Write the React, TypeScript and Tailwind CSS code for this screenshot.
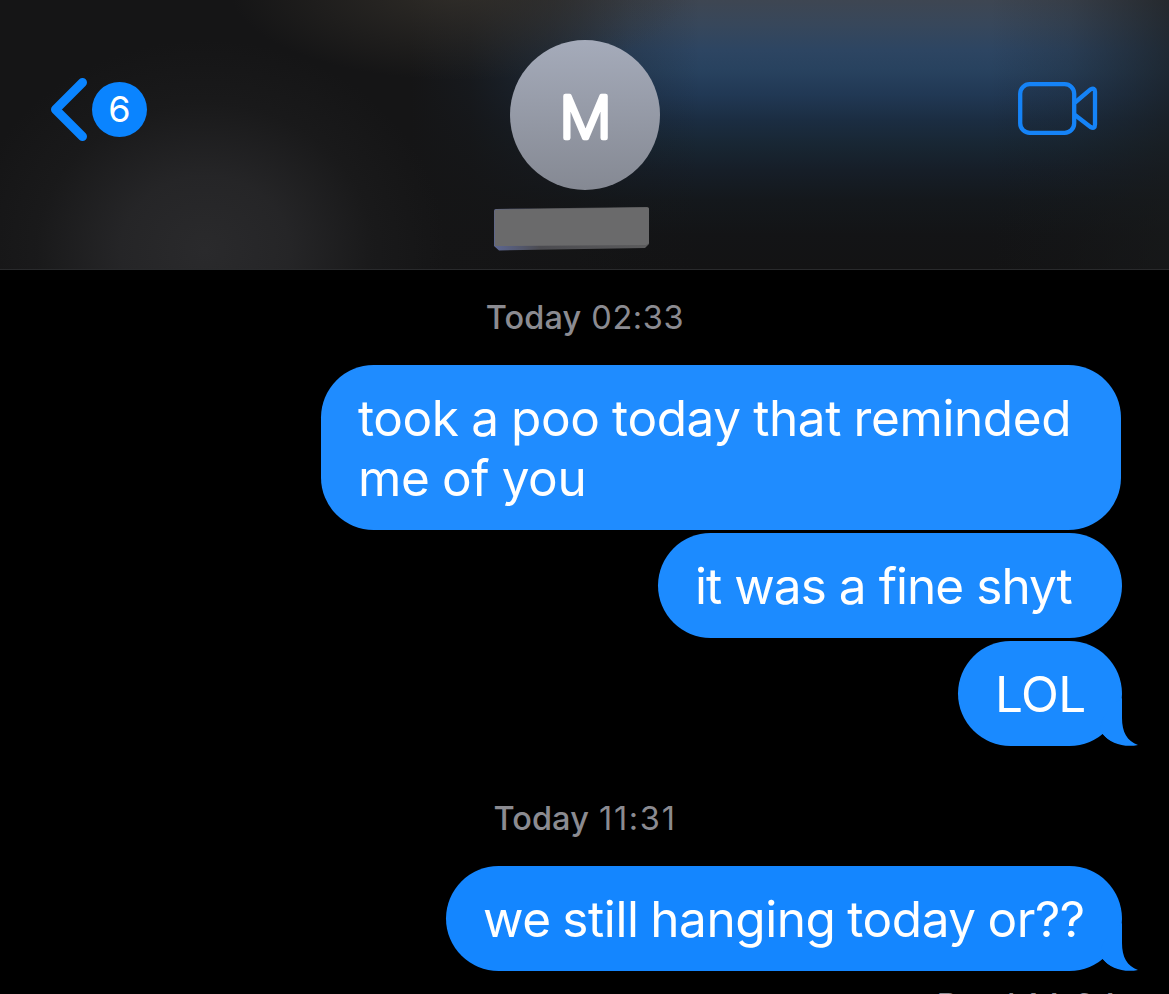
type Message = {
  id: number
  text: string
  size: string
  tail?: boolean
}

const earlier: Message[] = [
  { id: 1, text: 'took a poo today that reminded me of you', size: 'w-[800px] h-[165px] mr-px bg-[#1f8cff] pr-4 tracking-[-0.4px] [word-spacing:-1px]' },
  { id: 2, text: 'it was a fine shyt', size: 'w-[464px] h-[105px] bg-[#1c8bff] tracking-[-0.95px]' },
  { id: 3, text: 'LOL', size: 'w-[164px] h-[105px] bg-[#1a8aff] tracking-[-0.6px]', tail: true },
]

const later: Message[] = [
  { id: 4, text: 'we still hanging today or??', size: 'w-[676px] h-[105px] bg-[#1486ff] tracking-[-0.42px] [word-spacing:-1.8px]', tail: true },
]

function BackIcon() {
  return (
    <svg width="38" height="64" viewBox="0 0 38 64" fill="none" stroke="#0a84ff" strokeWidth="9" strokeLinecap="round" strokeLinejoin="round">
      <path d="M32.5 4.5 5.5 31.5 32.5 58.5" />
    </svg>
  )
}

function VideoIcon() {
  return (
    <svg width="82" height="56" viewBox="0 0 82 56" fill="none" stroke="#1583f7" strokeWidth="4.3" strokeLinejoin="round">
      <rect x="3.2" y="4.2" width="54" height="48.6" rx="9.5" />
      <path d="M58 22.5 73.5 9.4Q78 7.3 78 11.5V44.5Q78 49.5 73.5 47L58 35" />
    </svg>
  )
}

function Tail({ color }: { color: string }) {
  return (
    <svg className="absolute bottom-0 -right-4" width="48" height="48" viewBox="0 0 48 48">
      <path d="M32 0V20C32 34 37 43 48 47C34 50 20 45 12 36C6 30 16 10 32 0Z" fill={color} />
      <path d="M0 48C6 45 9 40 12.5 36C16.5 41 23 46 31 48Z" fill="#000" />
    </svg>
  )
}

function Bubble({ message }: { message: Message }) {
  return (
    <div className={`relative shrink-0 rounded-[52.5px] pl-[37px] pt-[23px] text-[49.5px] leading-[60px] text-white ${message.size}`}>
      {message.tail && <Tail color={message.id === 3 ? '#1a8aff' : '#1486ff'} />}
      <p className="relative">{message.text}</p>
    </div>
  )
}

function Timestamp({ time, spacing }: { time: string; spacing: string }) {
  return (
    <div className="flex h-[40px] items-center justify-center gap-[10px] pl-px text-[32.5px] leading-[40px] text-[#8b8b91]">
      <span className="font-medium tracking-[0.1px]">Today</span>
      <span className={spacing}>{time}</span>
    </div>
  )
}

export default function App() {
  return (
    <div className="flex h-[994px] w-[1169px] flex-col overflow-hidden bg-black font-['Inter',sans-serif]">
      <header className="grid h-[270px] shrink-0 grid-cols-3 border-b border-[#292a2c] bg-[radial-gradient(ellipse_240px_210px_at_205px_250px,#2a2a2c_0%,rgba(40,40,42,0.85)_35%,rgba(32,32,33,0.4)_70%,transparent_100%),radial-gradient(ellipse_230px_90px_at_460px_-10px,rgba(56,52,46,0.75)_0%,transparent_100%),linear-gradient(to_right,#151516_0px,#151516_410px,rgba(21,21,22,0.9)_470px,rgba(21,21,22,0.6)_550px,rgba(21,21,22,0.2)_630px,transparent_700px,transparent_990px,rgba(24,26,27,0.2)_1070px,rgba(24,26,27,0.65)_1169px),linear-gradient(to_bottom,#3e4652_0px,#37475b_25px,#2d4562_50px,#28425f_70px,#213854_95px,#1b2d42_120px,#182633_145px,#161e28_170px,#14181c_200px,#131416_235px,#131314_270px)]">
        <div className="flex items-start pl-[50px] pt-[78px]">
          <BackIcon />
          <span className="ml-1 mt-1 flex h-[55px] w-[55px] items-center justify-center rounded-full bg-[#0a84ff] pb-0.5 text-[36px] text-white">6</span>
        </div>

        <div className="flex flex-col items-center pl-0.5 pt-[40px]">
          <div className="h-[150px] w-[150px] shrink-0 rounded-full bg-linear-to-b from-[#a5abba] to-[#858993]">
            <svg width="150" height="150" viewBox="0 0 150 150">
              <text x="75.5" y="97.5" textAnchor="middle" fontFamily="Inter, sans-serif" fontSize="58" fontWeight="200" fill="#fff" stroke="#fff" strokeWidth="4.6" strokeLinejoin="round">M</text>
            </svg>
          </div>
          {/* Covered contact name */}
          <svg className="mr-[27px] mt-[16px]" width="157" height="46" viewBox="0 0 157 46">
            <defs>
              <linearGradient id="edge" x1="0" x2="1">
                <stop offset="0" stopColor="#5d6793" />
                <stop offset="0.3" stopColor="#4b4b50" />
                <stop offset="1" stopColor="#5c5c5d" />
              </linearGradient>
            </defs>
            <path d="M1 5Q1 3 3 3L154 1Q156 1 156 3V38L152 42 6 44.5 1 40Z" fill="url(#edge)" />
            <path d="M1.5 5Q1.5 3.5 3 3.5L154 1.5Q156 1.5 156 3V37L153 39 2 40Z" fill="#6a6a6b" />
          </svg>
        </div>

        <div className="flex items-start justify-end pr-[70px] pt-[80px]">
          <VideoIcon />
        </div>
      </header>

      {/* Conversation */}
      <main className="flex shrink-0 flex-col pt-[28px]">
        <Timestamp time="02:33" spacing="tracking-[0.6px]" />
        <div className="mt-[27px] flex flex-col items-end gap-[3px] pr-[47px]">
          {earlier.map(message => <Bubble key={message.id} message={message} />)}
        </div>

        <div className="mt-[53px]">
          <Timestamp time="11:31" spacing="tracking-[1.7px]" />
        </div>
        <div className="mt-[27px] flex flex-col items-end pr-[47px]">
          {later.map(message => <Bubble key={message.id} message={message} />)}
        </div>
        <div className="mt-[14px] flex justify-end gap-[10px] pr-[50px] pt-px text-[32.5px] leading-[40px] text-[#8b8b91]">
          <span className="font-medium">Read</span>
          <span className="tracking-[1.8px]">14:34</span>
        </div>
      </main>
    </div>
  )
}
